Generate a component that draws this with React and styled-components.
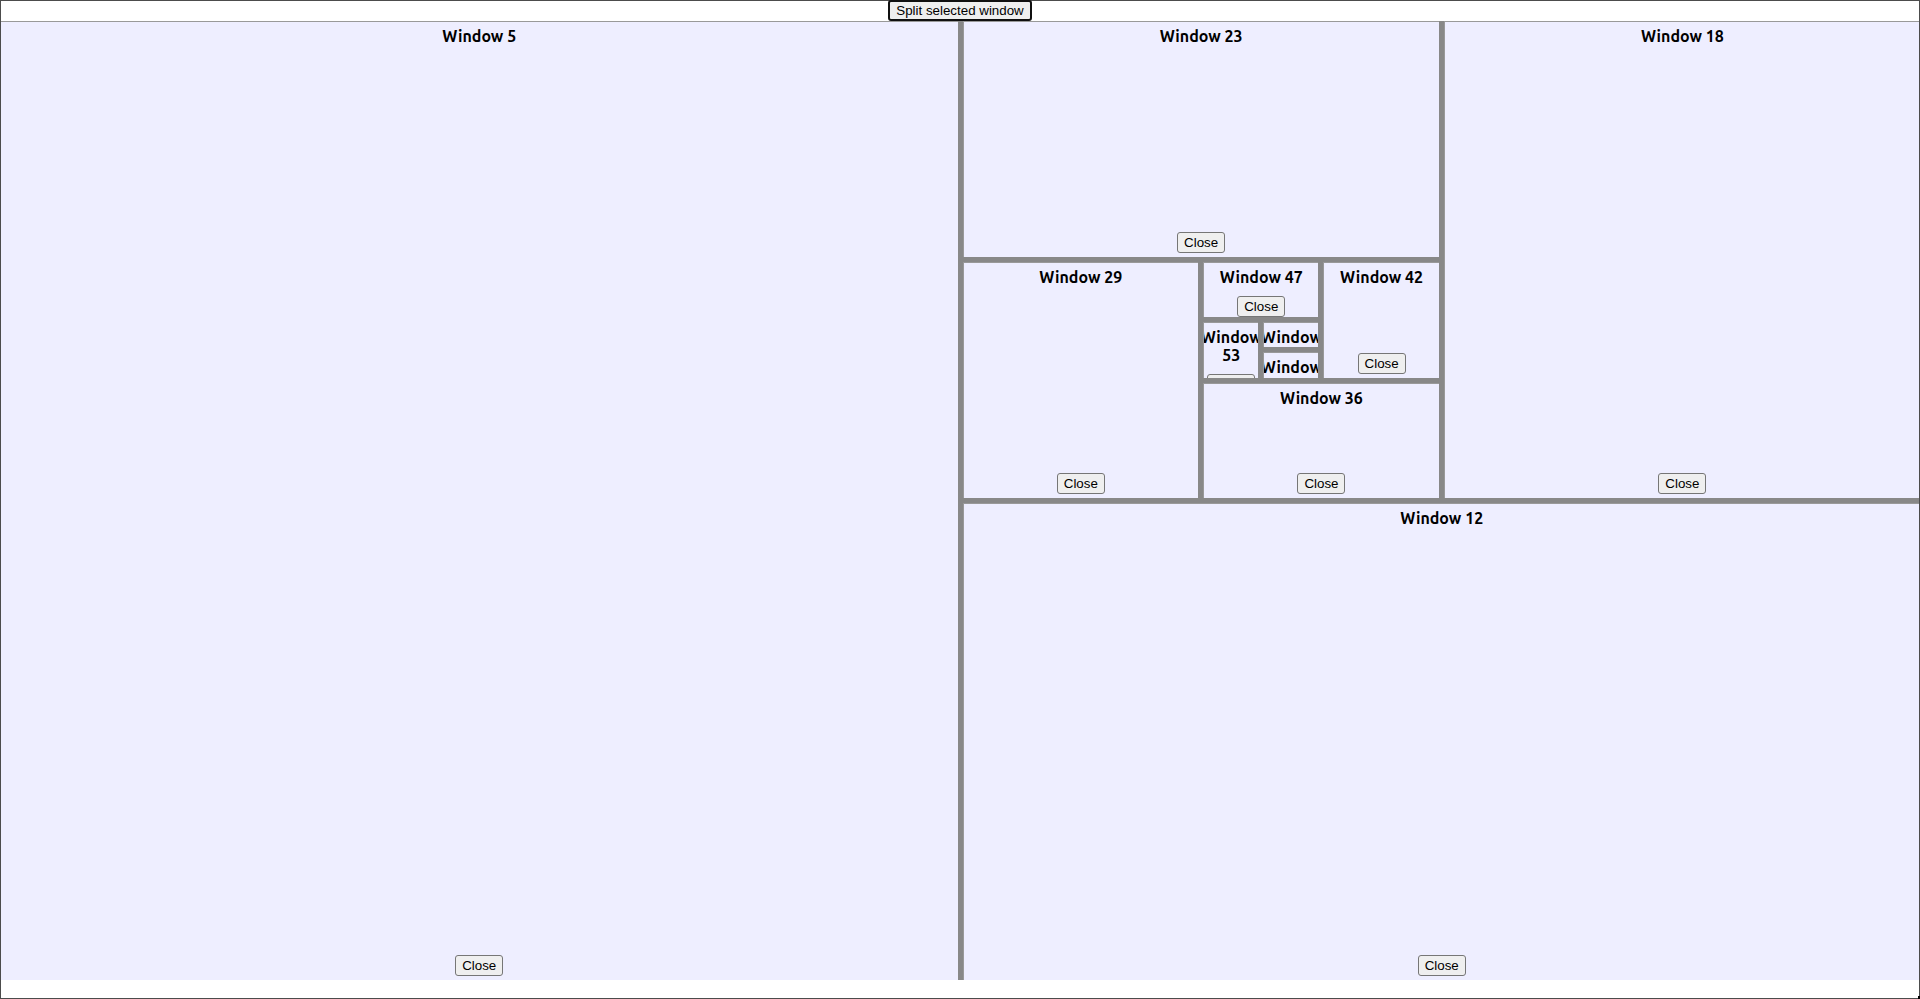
import React from "react";
import styled, { createGlobalStyle } from "styled-components";

const GlobalStyle = createGlobalStyle`
  *, *::before, *::after { box-sizing: border-box; }
  body { margin: 0; background: #fff; color: #000; }
`;

const Desktop = styled.div`
  position: relative;
  display: flex;
  flex-direction: column;
  height: 100vh;
  padding-bottom: 19px;
  overflow: hidden;

  &::before {
    content: "";
    position: absolute;
    right: 0;
    bottom: 0;
    width: 2px;
    height: 3px;
    background: #000;
    z-index: 1;
  }

  &::after {
    content: "";
    position: absolute;
    inset: 0;
    border: 1px solid #4c4c4c;
    pointer-events: none;
  }
`;

const Toolbar = styled.header`
  position: relative;
  z-index: 1;
  display: flex;
  justify-content: center;
  height: 21px;
`;

const Workspace = styled.main`
  display: grid;
  flex: 1;
  min-height: 0;
`;

const Split = styled.div`
  display: grid;
  min-width: 0;
  min-height: 0;
  gap: 5px;
  background: #888;
  ${({ $direction }) =>
    $direction === "row"
      ? "grid-template-columns: repeat(2, minmax(0, 1fr)); grid-template-rows: minmax(0, 1fr);"
      : "grid-template-rows: repeat(2, minmax(0, 1fr)); grid-template-columns: minmax(0, 1fr);"}
`;

const Pane = styled.section`
  display: flex;
  flex-direction: column;
  align-items: center;
  justify-content: space-between;
  min-width: 0;
  min-height: 0;
  padding: 5px 0 4px;
  border: solid #999;
  border-width: 1px 0 0 1px;
  background: #eef;
  overflow: hidden;
`;

const Title = styled.h2`
  flex: none;
  display: flex;
  justify-content: center;
  max-width: 100%;
  margin: 0 0 10px;
  font: 600 16px/18px Ubuntu, "Noto Sans", sans-serif;
  text-align: center;
`;

const Button = styled.button`
  flex: none;
  height: 21px;
  margin: 0;
  padding: 0 6px;
  border: 1px solid #767676;
  border-radius: 3px;
  background: #efefef;
  color: #000;
  font-family: "Liberation Sans", Arial, sans-serif;
  line-height: 15px;
`;

const SplitButton = styled(Button)`
  border: 2px solid #101010;
`;

const layout = {
  direction: "row",
  children: [
    5,
    {
      direction: "column",
      children: [
        {
          direction: "row",
          children: [
            {
              direction: "column",
              children: [
                23,
                {
                  direction: "row",
                  children: [
                    29,
                    {
                      direction: "column",
                      children: [
                        {
                          direction: "row",
                          children: [
                            {
                              direction: "column",
                              children: [
                                47,
                                {
                                  direction: "row",
                                  children: [53, { direction: "column", children: [58, 59] }],
                                },
                              ],
                            },
                            42,
                          ],
                        },
                        36,
                      ],
                    },
                  ],
                },
              ],
            },
            18,
          ],
        },
        12,
      ],
    },
  ],
};

function Tile({ node }) {
  if (typeof node === "number") {
    return (
      <Pane>
        <Title><span>Window {node}</span></Title>
        <Button type="button">Close</Button>
      </Pane>
    );
  }
  return (
    <Split $direction={node.direction}>
      {node.children.map((child, index) => (
        <Tile key={index} node={child} />
      ))}
    </Split>
  );
}

export default function App() {
  return (
    <>
      <GlobalStyle />
      <Desktop>
        <Toolbar>
          <SplitButton type="button">Split selected window</SplitButton>
        </Toolbar>
        <Workspace>
          <Tile node={layout} />
        </Workspace>
      </Desktop>
    </>
  );
}
